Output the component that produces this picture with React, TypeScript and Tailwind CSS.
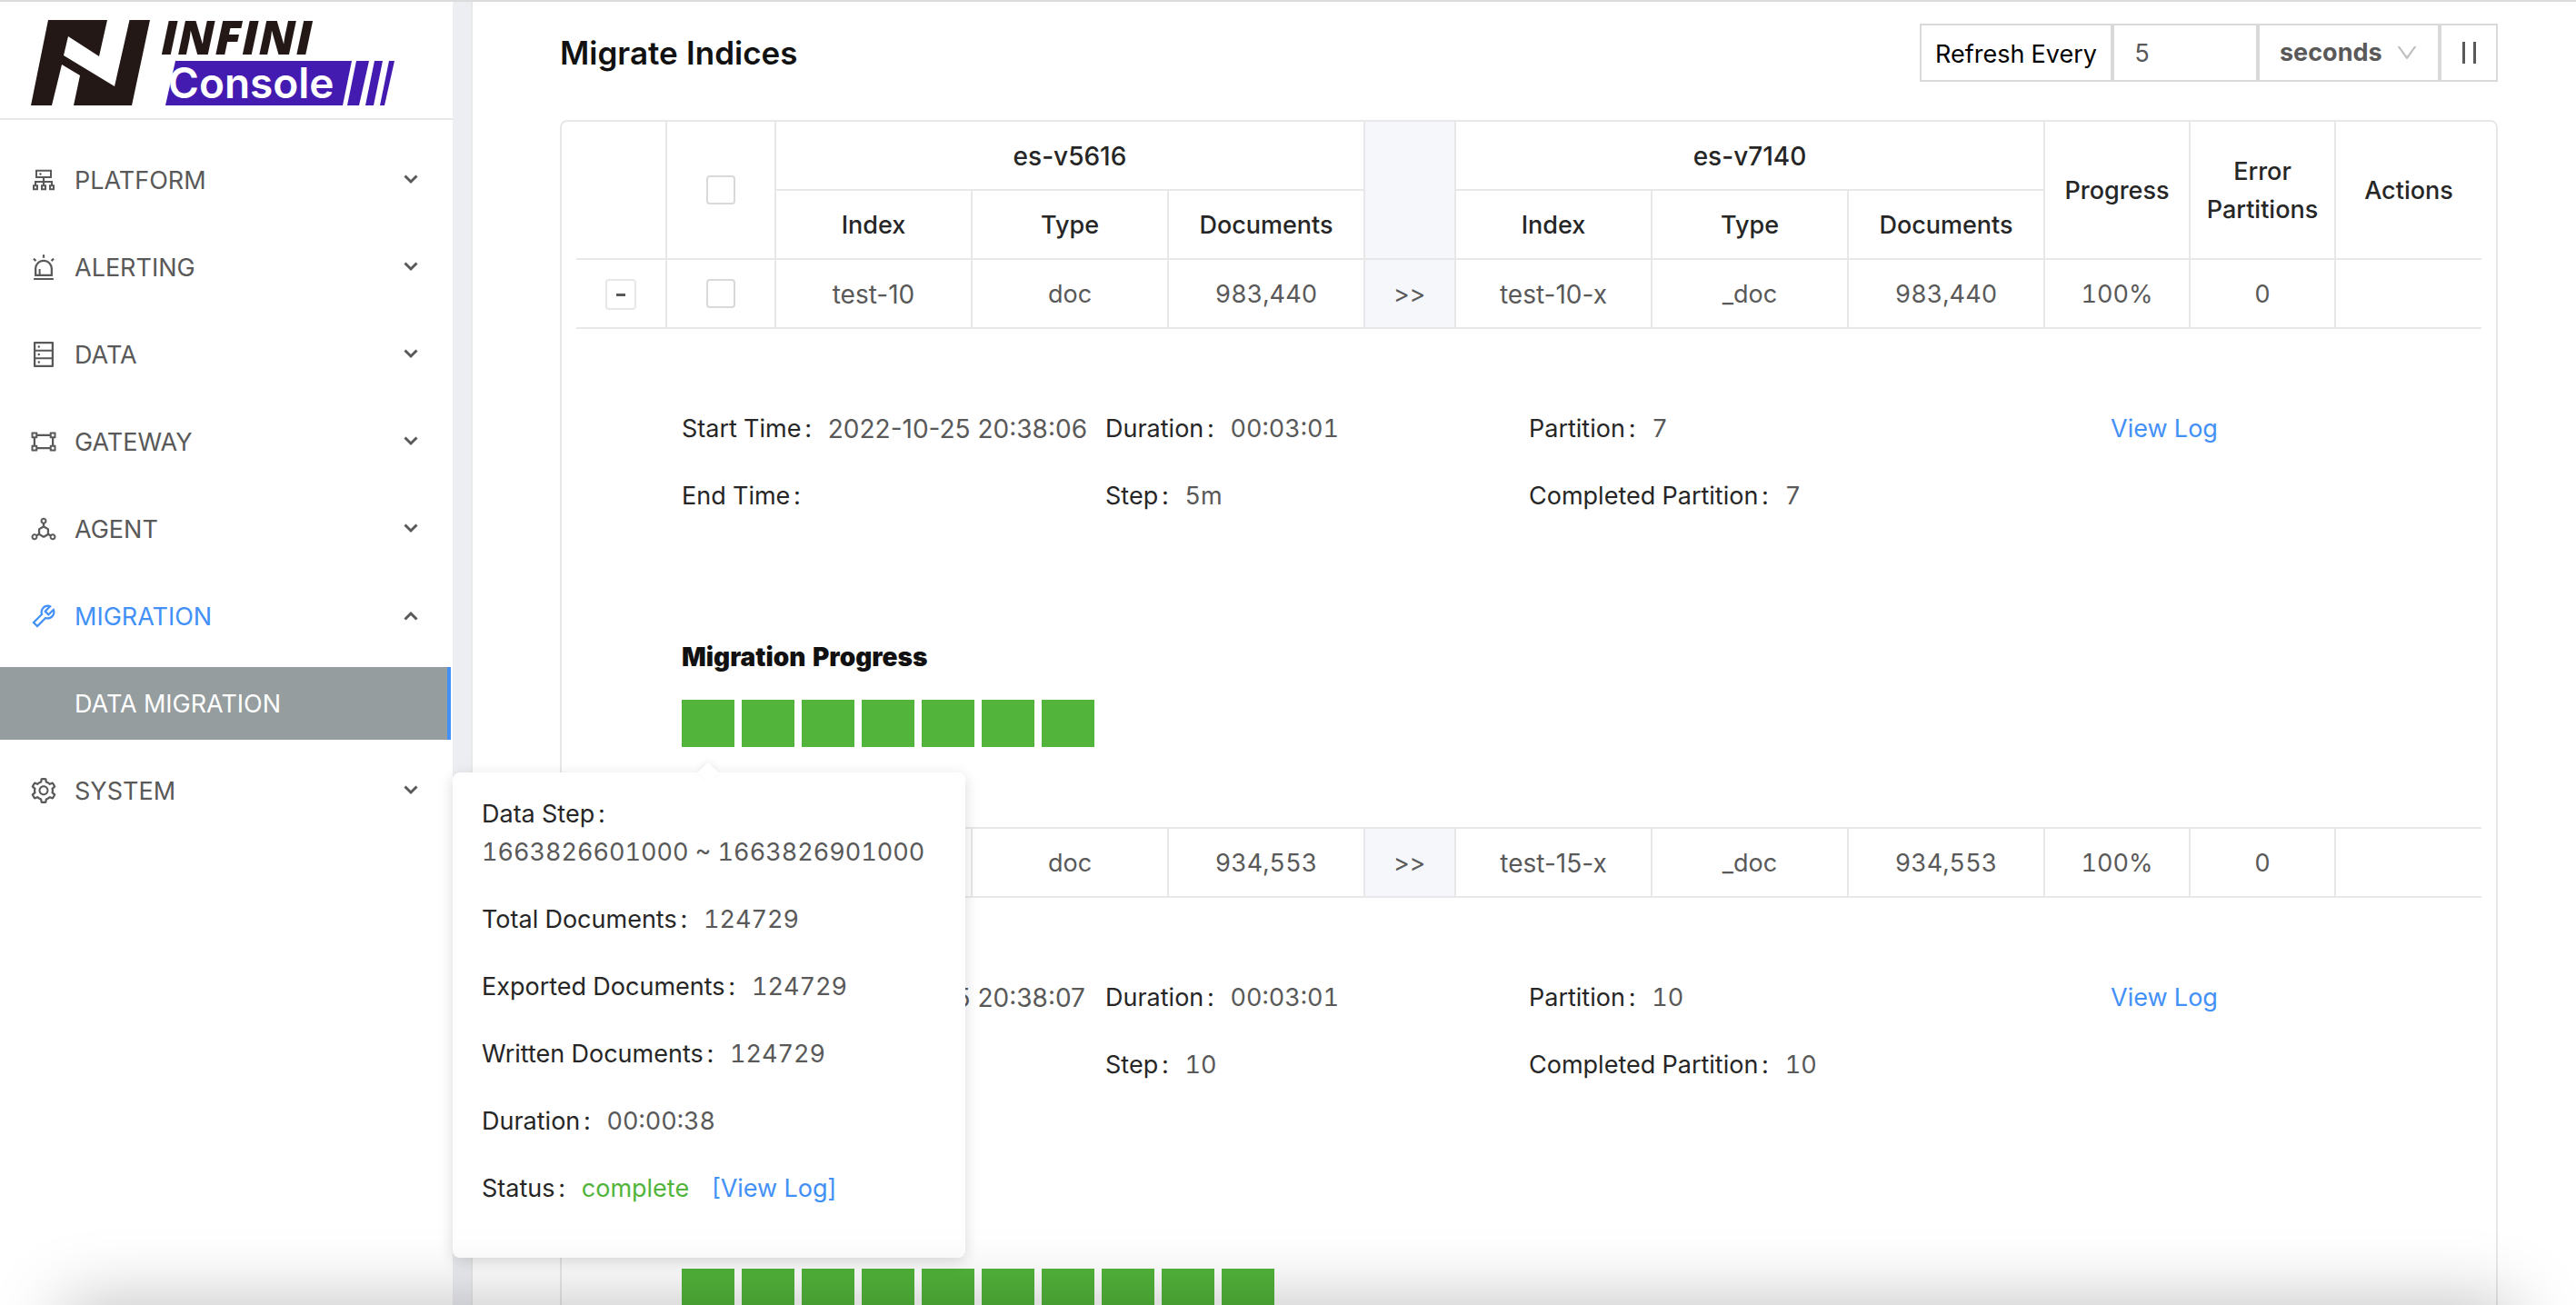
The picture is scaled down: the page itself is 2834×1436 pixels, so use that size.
import { useId } from "react";
import {
  AiOutlineAlert,
  AiOutlineCluster,
  AiOutlineDatabase,
  AiOutlineDeploymentUnit,
  AiOutlineDown,
  AiOutlineGateway,
  AiOutlineSetting,
  AiOutlineTool,
} from "react-icons/ai";
import type { ReactNode } from "react";

const menu = [
  { label: "PLATFORM", Icon: AiOutlineCluster },
  { label: "ALERTING", Icon: AiOutlineAlert },
  { label: "DATA", Icon: AiOutlineDatabase },
  { label: "GATEWAY", Icon: AiOutlineGateway },
  { label: "AGENT", Icon: AiOutlineDeploymentUnit },
  { label: "MIGRATION", Icon: AiOutlineTool, open: true },
  { label: "SYSTEM", Icon: AiOutlineSetting },
];

function Logo() {
  return (
    <svg viewBox="0 0 404 98" className="h-[98px] w-[404px] overflow-visible" role="img" aria-label="INFINI Console">
      <g fill="#231815">
        <path d="M20 2H85L76 42L42 20L37 41L93 75L109.500 2H132L112 96H48L55 63L35 51L24 96H1Z" />
      </g>
      <text x="144" y="40" fontFamily="Open Sans" fontWeight="800" fontStyle="italic" fontSize="52" fill="#231815">
        INFINI
      </text>
      <g fill="#431bb1">
        <path d="M160 47H354L344 96H149Z" />
        <path d="M359 47H373L362 96H349Z" />
        <path d="M379 47H388L378 96H369Z" />
        <path d="M395 47H401L390 96H385Z" />
      </g>
      <text x="152" y="88" fontFamily="Inter" fontWeight="600" fontSize="46" fill="#fff">
        Console
      </text>
    </svg>
  );
}

function Chevron({ up = false }: { up?: boolean }) {
  return (
    <svg viewBox="0 0 16 12" className="h-3 w-4" fill="none" stroke="#595959" strokeWidth="3">
      <path d={up ? "M1.500 9.500L8 3L14.500 9.500" : "M1.500 1.500L8 8L14.500 1.500"} />
    </svg>
  );
}

function Sidebar() {
  return (
    <aside className="w-[498px] shrink-0 bg-white">
      <div className="flex h-[132px] items-center border-b-2 border-[#e8e8e8] pl-[33px] pt-2">
        <Logo />
      </div>
      <nav className="flex flex-col gap-4 pt-[26px]">
        {menu.map(({ label, Icon, open }) => (
          <div key={label} className="flex flex-col gap-4">
            <button
              type="button"
              aria-expanded={!!open}
              className={`flex h-20 w-full items-center pl-8 pr-[38px] ${open ? "text-[#4390f7]" : "text-[#595959]"}`}
            >
              <Icon className="size-8" />
              <span className="ml-[18px] flex-1 pt-[2px] text-left">{label}</span>
              <Chevron up={open} />
            </button>
            {open && (
              <a
                href="#data-migration"
                className="mr-[2px] flex h-20 items-center border-r-4 border-[#4390f7] bg-[#959d9f] pl-[82px] pt-[2px] text-white"
              >
                DATA MIGRATION
              </a>
            )}
          </div>
        ))}
      </nav>
    </aside>
  );
}

function Toolbar() {
  const id = useId();
  return (
    <div className="flex h-16 text-[#595959]">
      <label htmlFor={id} className="flex w-[212px] items-center justify-center border-2 border-[#d9d9d9] pt-1 text-black">
        Refresh Every
      </label>
      <input id={id} defaultValue="5" className="w-40 border-2 border-[#d9d9d9] pl-[22px] pt-[2px] outline-none" />
      <div className="relative w-[200px]">
        <select
          aria-label="Refresh unit"
          className="h-full w-full appearance-none border-2 border-[#d9d9d9] bg-white pl-[22px] font-bold outline-none"
        >
          <option>seconds</option>
        </select>
        <AiOutlineDown className="pointer-events-none absolute right-[22px] top-[18px] size-7 text-[#bfbfbf]" />
      </div>
      <button
        type="button"
        aria-label="Pause"
        className="flex w-16 items-center justify-center gap-[9px] border-2 border-[#d9d9d9]"
      >
        <span className="h-6 w-[3px] bg-[#595959]" />
        <span className="h-6 w-[3px] bg-[#595959]" />
      </button>
    </div>
  );
}

function Field({ label, children }: { label: string; children?: ReactNode }) {
  return (
    <div className="flex pb-8 leading-[42px]">
      <dt className="shrink-0 text-[#262626]">
        {label}
        <span className="ml-1 mr-[18px]">:</span>
      </dt>
      <dd className="whitespace-nowrap">{children}</dd>
    </div>
  );
}

function StepPopover() {
  return (
    <div
      role="tooltip"
      className="absolute left-[-252px] top-20 z-20 w-[564px] rounded-lg bg-white px-8 pb-[23px] pt-[25px] shadow-[0_4px_16px_rgba(0,0,0,0.15)]"
    >
      <span className="absolute left-[273px] top-[-8px] size-4 rotate-45 bg-white shadow-[-2px_-2px_6px_rgba(0,0,0,0.06)]" />
      <dl className="relative">
        <div className="pb-8 leading-[42px]">
          <dt className="text-[#262626]">
            Data Step<span className="ml-1">:</span>
          </dt>
          <dd>1663826601000 ~ 1663826901000</dd>
        </div>
        <Field label="Total Documents">124729</Field>
        <Field label="Exported Documents">124729</Field>
        <Field label="Written Documents">124729</Field>
        <Field label="Duration">00:00:38</Field>
        <Field label="Status">
          <span className="text-[#52b43a]">complete</span>
          <a href="#step-log" className="ml-6 text-[#4390f7]">
            [View Log]
          </a>
        </Field>
      </dl>
    </div>
  );
}

type Task = {
  source: string;
  target: string;
  documents: string;
  start: string;
  step: string;
  partitions: number;
  popover?: boolean;
};

const tasks: Task[] = [
  { source: "test-10", target: "test-10-x", documents: "983,440", start: "2022-10-25 20:38:06", step: "5m", partitions: 7, popover: true },
  { source: "test-15", target: "test-15-x", documents: "934,553", start: "2022-10-25 20:38:07", step: "10", partitions: 10 },
];

const checkbox = "block mx-auto size-8 appearance-none rounded border-2 border-[#d9d9d9] bg-white";
const controlCell = "h-[76px] border-b-2 border-r-2 border-[#e8e8e8] p-0 text-center";
const cell = "h-[76px] border-b-2 border-r-2 border-[#e8e8e8] px-0 pb-0 pt-[2px] text-center";
const lastCell = "h-[76px] border-b-2 border-[#e8e8e8] px-0 pb-0 pt-[2px] text-center";
const name = "text-[28px] proportional-nums";

function TaskRows({ task }: { task: Task }) {
  return (
    <>
      <tr>
        <td className={cell}>
          <button
            type="button"
            aria-label="Collapse row"
            className="mx-auto flex size-[34px] items-center justify-center rounded border-2 border-[#e8e8e8]"
          >
            <span className="h-[3px] w-[10px] bg-[#595959]" />
          </button>
        </td>
        <td className={controlCell}>
          <input type="checkbox" aria-label={`Select ${task.source}`} className={checkbox} />
        </td>
        <td className={`${cell} ${name}`}>{task.source}</td>
        <td className={cell}>doc</td>
        <td className={cell}>{task.documents}</td>
        <td className={`${cell} bg-[#f5f7fb]`}>&gt;&gt;</td>
        <td className={`${cell} ${name}`}>{task.target}</td>
        <td className={cell}>_doc</td>
        <td className={cell}>{task.documents}</td>
        <td className={cell}>100%</td>
        <td className={cell}>0</td>
        <td className={lastCell} />
      </tr>
      <tr>
        <td colSpan={12} className="h-[550px] border-b-2 border-[#e8e8e8] px-[116px] pb-0 pt-[89px] align-top">
          <div className="grid grid-cols-4">
            <dl>
              <Field label="Start Time">
                <span className={`block ${name}`}>{task.start}</span>
              </Field>
              <Field label="End Time" />
            </dl>
            <dl>
              <Field label="Duration">00:03:01</Field>
              <Field label="Step">{task.step}</Field>
            </dl>
            <dl>
              <Field label="Partition">{task.partitions}</Field>
              <Field label="Completed Partition">{task.partitions}</Field>
            </dl>
            <div className="text-center leading-[42px]">
              <a href="#log" className="text-[#4390f7]">
                View Log
              </a>
            </div>
          </div>
          <h2 className="mt-[103px] text-[28px] font-black leading-[42px] text-[#111]">Migration Progress</h2>
          <div className="relative mt-[26px] flex gap-2">
            {Array.from({ length: task.partitions }, (_, i) => (
              <span key={i} className="h-[52px] w-[58px] bg-[#52b43a]" />
            ))}
            {task.popover && <StepPopover />}
          </div>
        </td>
      </tr>
    </>
  );
}

function IndexTable() {
  return (
    <div className="rounded-lg border-2 border-[#e8e8e8] px-4">
      <table className="w-full table-fixed border-separate border-spacing-0">
        <colgroup>
          <col className="w-[100px]" />
          <col className="w-[120px]" />
          <col />
          <col />
          <col />
          <col className="w-[100px]" />
          <col />
          <col />
          <col />
          <col className="w-[160px]" />
          <col className="w-[160px]" />
          <col className="w-[160px]" />
        </colgroup>
        <thead className="text-[#262626] *:*:font-medium">
          <tr>
            <th rowSpan={2} className={cell} />
            <th rowSpan={2} className={controlCell}>
              <input type="checkbox" aria-label="Select all" className={checkbox} />
            </th>
            <th colSpan={3} className={`${cell} ${name}`}>es-v5616</th>
            <th rowSpan={2} className={`${cell} bg-[#f5f7fb]`} />
            <th colSpan={3} className={`${cell} ${name}`}>es-v7140</th>
            <th rowSpan={2} className={cell}>Progress</th>
            <th rowSpan={2} className={cell}>Error Partitions</th>
            <th rowSpan={2} className={lastCell}>Actions</th>
          </tr>
          <tr>
            <th className={cell}>Index</th>
            <th className={cell}>Type</th>
            <th className={cell}>Documents</th>
            <th className={cell}>Index</th>
            <th className={cell}>Type</th>
            <th className={cell}>Documents</th>
          </tr>
        </thead>
        <tbody>
          {tasks.map((task) => (
            <TaskRows key={task.source} task={task} />
          ))}
        </tbody>
      </table>
    </div>
  );
}

export default function App() {
  return (
    <div className="relative flex h-screen overflow-hidden bg-white font-[Inter,sans-serif] text-[27px] leading-[42px] text-[#595959] tabular-nums">
      <Sidebar />
      <div className="w-[22px] shrink-0 border-r-2 border-[#e8e8e8] bg-[#edeef2]" />
      <main className="min-w-0 flex-1 pl-24 pr-[86px] pt-[26px]">
        <header className="mb-[42px] flex justify-between">
          <h1 className="text-[35px] font-semibold leading-[64px] text-[#111]">Migrate Indices</h1>
          <Toolbar />
        </header>
        <IndexTable />
      </main>
      <div className="pointer-events-none absolute inset-x-0 top-0 h-[2px] bg-[#dcdcdc]" />
      <div className="pointer-events-none absolute inset-x-[70px] top-full z-30 h-20 shadow-[0_0_80px_rgba(0,0,0,0.27)]" />
    </div>
  );
}
